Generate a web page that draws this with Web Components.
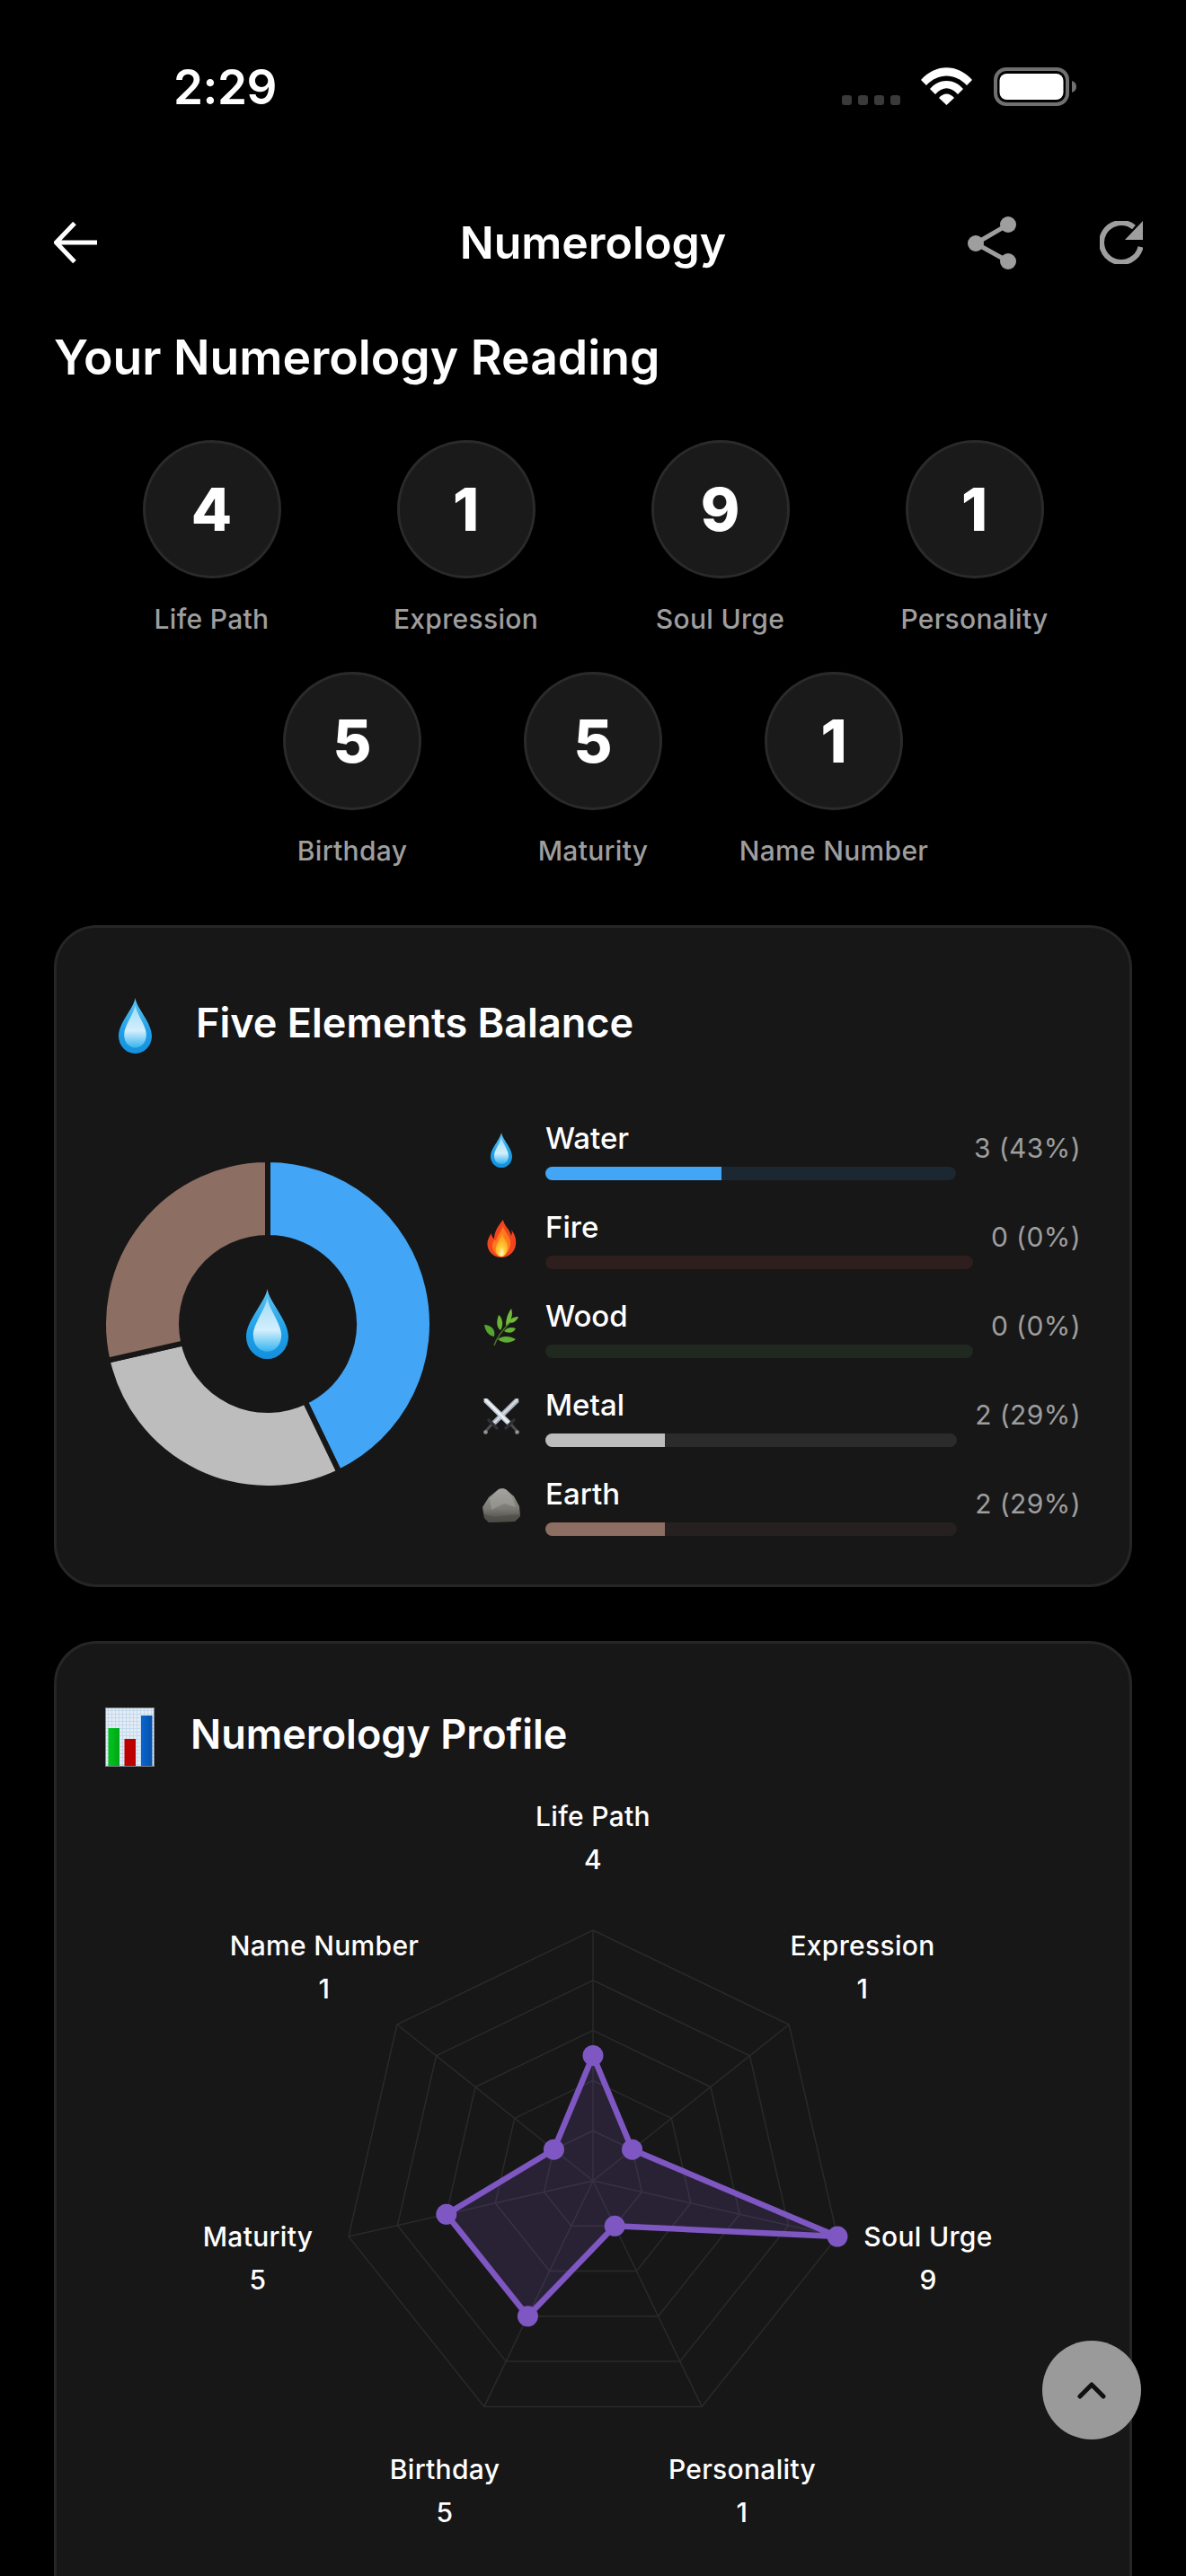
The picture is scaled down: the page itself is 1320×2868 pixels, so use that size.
<!DOCTYPE html>
<html lang="en">
<head>
<meta charset="utf-8">
<title>Numerology</title>
<style>
    html, body { margin: 0; padding: 0; background: #000; }
    body { width: 1320px; height: 2868px; overflow: hidden; color: #fff; font-family: Inter, "Noto Sans", sans-serif; }
    numerology-screen { display: block; }
</style>
</head>
<body>
<numerology-screen>
    <status-bar></status-bar>
    <app-header></app-header>
    <h-title>Your Numerology Reading</h-title>
    <badge-row pitch="283">
        <number-badge value="4" label="Life Path"></number-badge>
        <number-badge value="1" label="Expression"></number-badge>
        <number-badge value="9" label="Soul Urge"></number-badge>
        <number-badge value="1" label="Personality"></number-badge>
    </badge-row>
    <badge-row pitch="268" last>
        <number-badge value="5" label="Birthday"></number-badge>
        <number-badge value="5" label="Maturity"></number-badge>
        <number-badge value="1" label="Name Number"></number-badge>
    </badge-row>
    <section-card heading="Five Elements Balance" icon="drop" icon-x="15" icon-w="37" icon-h="62" gap="49" pad="55" card-h="737">
        <elements-balance>
            <donut-chart></donut-chart>
            <element-list>
                <element-row icon="drop" iw="24" ih="39" name="Water" value="3 (43%)" pct="43" fill="#42a5f5" track="#1b2731"></element-row>
                <element-row icon="fire" iw="33" ih="42" name="Fire" value="0 (0%)" pct="0" fill="#ef5350" track="#2f1e1e"></element-row>
                <element-row icon="leaf" iw="38" ih="42" name="Wood" value="0 (0%)" pct="0" fill="#66bb6a" track="#202920"></element-row>
                <element-row icon="swords" iw="40" ih="40" name="Metal" value="2 (29%)" pct="29" fill="#bdbdbd" track="#2b2b2b"></element-row>
                <element-row icon="rock" iw="42" ih="38" name="Earth" value="2 (29%)" pct="29" fill="#8d6e63" track="#262120"></element-row>
            </element-list>
        </elements-balance>
    </section-card>
    <section-card heading="Numerology Profile" icon="chart" icon-x="0" icon-w="55" icon-h="66" gap="40" pad="50" card-h="1200">
        <radar-chart></radar-chart>
    </section-card>
    <scroll-top></scroll-top>
</numerology-screen>

<script>
// emoji have no font here, so they are little svgs
const EMOJI = {
    drop: `<svg viewBox="0 0 24 38" preserveAspectRatio="none" width="100%" height="100%">
        <defs>
            <linearGradient id="dropOuter" x1="0" y1="0" x2="0" y2="1"><stop offset="0" stop-color="#5cc4f2"/><stop offset=".6" stop-color="#1f9fe8"/><stop offset="1" stop-color="#1590dc"/></linearGradient>
            <linearGradient id="dropInner" x1="0" y1="0" x2="0" y2="1"><stop offset="0" stop-color="#9fdcf8"/><stop offset=".6" stop-color="#d3effc"/><stop offset="1" stop-color="#35b4f0"/></linearGradient>
        </defs>
        <path d="M12 0C13 7 24 17 24 26A12 12 0 0 1 0 26C0 17 11 7 12 0Z" fill="url(#dropOuter)"/>
        <path d="M12 5C13 11 20 19 20 25C20 31 16 34 12 34C8 34 4 31 4 25C4 19 11 11 12 5Z" fill="url(#dropInner)"/>
    </svg>`,
    fire: `<svg viewBox="0 0 33 42" width="100%" height="100%">
        <defs><radialGradient id="fireCore" cx=".5" cy=".85" r=".7"><stop offset="0" stop-color="#fffbe0"/><stop offset=".35" stop-color="#ffd23c"/><stop offset="1" stop-color="#ff9a1f"/></radialGradient></defs>
        <path d="M18 0C19 7 26 11 27 18C28 15 28 13 27 11C31 16 33 22 32 28C31 36 24 42 16 42C8 42 1 36 0.500 28C0 23 3 18 5 15C5 18 6 20 8 21C8 13 13 6 18 0Z" fill="#f0451f"/>
        <path d="M18 7C19 13 25 17 26 24C27 32 22 40 16 41C10 40 5 34 6 27C7 23 9 21 10 24C11 18 16 13 18 7Z" fill="#ff7a1c"/>
        <path d="M17 15C18 21 23 24 23 30C23 36 20 41 16 41C12 41 9 36 10 31C11 25 15 21 17 15Z" fill="url(#fireCore)"/>
    </svg>`,
    leaf: `<svg viewBox="0 0 38 42" width="100%" height="100%">
        <path d="M11 41C14 32 20 24 29 15" stroke="#4a7a22" stroke-width="1.400" fill="none"/>
        <path d="M11 31C4 30 1 24 0 18C7 18 13 23 11 31Z" fill="#55a52e"/>
        <path d="M18 24C14 21 13 15 16 7C20 10 22 18 18 24Z" fill="#6ab535"/>
        <path d="M24 19C24 14 25 7 30 0C32 5 31 14 24 19Z" fill="#74bd3c"/>
        <path d="M27 15C29 11 33 9 38 9C36 14 32 17 27 15Z" fill="#72bb3a"/>
        <path d="M22 25C25 21 30 20 35 22C33 27 27 28 22 25Z" fill="#66b234"/>
        <path d="M15 34C20 30 28 30 35 34C29 39 21 39 15 34Z" fill="#5fad32"/>
    </svg>`,
    swords: `<svg viewBox="0 0 40 40" width="100%" height="100%">
        <path d="M29 27L38 37M11 27L2 37" stroke="#4b4d52" stroke-width="3" stroke-linecap="round"/>
        <path d="M39 0L35.500 0L9 26L13 30L39.500 4Z" fill="#aeb8c2"/>
        <path d="M38 1L11 28" stroke="#e3e9ee" stroke-width="1.500"/>
        <path d="M0.500 0L4.500 0L31 26L27 30L0.500 4Z" fill="#c6d0d8"/>
        <path d="M2 1L29 28" stroke="#f2f6f9" stroke-width="1.800"/>
        <path d="M6 24L15 33M34 24L25 33" stroke="#2f3136" stroke-width="3.500" stroke-linecap="round"/>
        <circle cx="2.500" cy="37.500" r="2.300" fill="#9c8f90"/><circle cx="37.500" cy="37.500" r="2.300" fill="#9c8f90"/>
    </svg>`,
    rock: `<svg viewBox="0 0 42 38" width="100%" height="100%">
        <defs><linearGradient id="rockFill" x1="0" y1="0" x2="0" y2="1"><stop offset="0" stop-color="#9d9c96"/><stop offset=".6" stop-color="#7a7973"/><stop offset="1" stop-color="#45443f"/></linearGradient></defs>
        <path d="M18 1C21 0 25 0 27 2L35 9L41 20L42 31L36 37L7 38L2 33L0 21L7 10Z" fill="url(#rockFill)"/>
        <path d="M18 1C21 0 25 0 27 2L33 10L37 21L24 17L10 24L8 11Z" fill="#a9a8a2" opacity=".5"/>
        <path d="M2 29L14 32L28 30L41 29L42 31L36 37L7 38L2 33Z" fill="#4f4e49" opacity=".65"/>
    </svg>`,
    chart: `<svg viewBox="0 0 55 66" width="100%" height="100%">
        <defs>
            <pattern id="chartGrid" width="4" height="4" patternUnits="userSpaceOnUse"><rect width="4" height="4" fill="#e4edf5"/><rect x="3" width="1" height="4" fill="#c4d9ec"/><rect y="3" width="4" height="1" fill="#c4d9ec"/></pattern>
            <linearGradient id="barGreen" x1="0" x2="1" y1="0" y2="0"><stop offset="0" stop-color="#00c41c"/><stop offset="1" stop-color="#00a618"/></linearGradient>
            <linearGradient id="barBlue" x1="0" x2="1" y1="0" y2="0"><stop offset="0" stop-color="#0a66cf"/><stop offset="1" stop-color="#0650a8"/></linearGradient>
        </defs>
        <rect x=".5" y=".5" width="54" height="65" fill="url(#chartGrid)" stroke="#7d8186"/>
        <rect x="3.500" y="23" width="12.500" height="42" fill="url(#barGreen)"/>
        <rect x="21.500" y="35" width="12.500" height="30" fill="#bc0000"/>
        <rect x="40" y="9" width="12.500" height="56" fill="url(#barBlue)"/>
    </svg>`
};

class Base extends HTMLElement {
    constructor() {
        super();
        this.attachShadow({ mode: 'open' });
    }
    attr(name, fallback = '') {
        return this.getAttribute(name) ?? fallback;
    }
}

class NumerologyScreen extends Base {
    connectedCallback() {
        this.shadowRoot.innerHTML = `
            <style>
                :host { display: block; position: relative; width: 1320px; height: 2868px; overflow: hidden; background: #000; }
                .content { display: flex; flex-direction: column; padding: 0 60px; }
            </style>
            <div class="content"><slot></slot></div>
        `;
    }
}

class StatusBar extends Base {
    connectedCallback() {
        this.shadowRoot.innerHTML = `
            <style>
                :host { display: flex; align-items: flex-start; height: 210px; margin: 0 -60px; padding: 0 122px 0 193px; box-sizing: border-box; justify-content: space-between; }
                .time { font: 600 53px/1 Inter, sans-serif; margin-top: 71px; color: #fff; letter-spacing: -.5px; }
                .icons { display: flex; align-items: flex-start; margin-top: 75px; }
                .dots { display: flex; gap: 7px; margin-top: 31px; margin-right: 23px; }
                .dots i { width: 11px; height: 11px; border-radius: 3px; background: #3a3a3a; }
                svg { display: block; }
                .wifi { margin-right: 24px; }
            </style>
            <div class="time">2:29</div>
            <div class="icons">
                <div class="dots"><i></i><i></i><i></i><i></i></div>
                <svg class="wifi" width="57" height="42" viewBox="0 0 57 42" fill="#fff">
                    <path d="M0 14C16-4.500 41-4.500 57 14L51 20C38 6 19 6 6 20Z"/>
                    <path d="M10 24C20 12 37 12 47 24L41 30C33 21 24 21 16 30Z"/>
                    <path d="M20 34C25 28 32 28 37 34L28.500 42Z"/>
                </svg>
                <svg width="92" height="43" viewBox="0 0 92 43">
                    <rect x="2" y="2" width="80" height="39" rx="12" fill="none" stroke="#707070" stroke-width="4"/>
                    <rect x="6.500" y="7" width="71" height="29" rx="8" fill="#fff"/>
                    <path d="M87 15C90 16 92 18 92 21.500C92 25 90 27 87 28Z" fill="#707070"/>
                </svg>
            </div>
        `;
    }
}

class AppHeader extends Base {
    connectedCallback() {
        this.shadowRoot.innerHTML = `
            <style>
                :host { display: flex; align-items: center; height: 120px; position: relative; }
                .title { position: absolute; left: 0; right: 0; text-align: center; font: 600 50px/1 Inter, sans-serif; color: #fff; }
                .spacer { flex: 1; }
                svg { display: block; position: relative; }
                .share { margin-right: 93px; }
                .refresh { margin-right: -12px; }
            </style>
            <svg width="48" height="46" viewBox="0 0 48 46" fill="none" stroke="#fff" stroke-width="5"><path d="M48 23H3M23 1.500L2.500 23L23 44.500"/></svg>
            <div class="title">Numerology</div>
            <div class="spacer"></div>
            <svg class="share" width="54" height="59" viewBox="0 0 54 59" fill="#9e9e9e">
                <path d="M9 30L45 9M9 30L45 50" stroke="#9e9e9e" stroke-width="5" fill="none"/>
                <circle cx="9" cy="30" r="9"/><circle cx="45" cy="9" r="9"/><circle cx="45" cy="50" r="9"/>
            </svg>
            <svg class="refresh" width="48" height="48" viewBox="0 0 48 48" fill="none">
                <path d="M45.500 29A22 22 0 1 1 38 7" stroke="#9e9e9e" stroke-width="6"/>
                <path d="M28 21L48 0V21Z" fill="#9e9e9e"/>
            </svg>
        `;
    }
}

class HTitle extends Base {
    connectedCallback() {
        this.shadowRoot.innerHTML = `
            <style>:host { display: block; font: 600 53.500px/68px Inter, sans-serif; color: #fff; margin: 34px 0 58px; }</style>
            <slot></slot>
        `;
    }
}

class BadgeRow extends Base {
    connectedCallback() {
        this.shadowRoot.innerHTML = `
            <style>
                :host { display: flex; justify-content: center; height: 258px; --pitch: ${this.attr('pitch', '283')}px; }
                :host([last]) { margin-bottom: 24px; }
            </style>
            <slot></slot>
        `;
    }
}

class NumberBadge extends Base {
    connectedCallback() {
        this.shadowRoot.innerHTML = `
            <style>
                :host { display: flex; flex-direction: column; align-items: center; width: var(--pitch); flex: none; }
                .ring { width: 154px; height: 154px; box-sizing: border-box; border-radius: 50%; background: #1a1a1a; border: 3px solid #2a2a2a;
                    display: flex; align-items: center; justify-content: center; font: 800 66px/1 Inter, sans-serif; color: #fff; }
                .label { margin-top: 27px; font: 500 30px/36px Inter, sans-serif; color: #9e9e9e; letter-spacing: .3px; white-space: nowrap; }
            </style>
            <div class="ring">${this.attr('value')}</div>
            <div class="label">${this.attr('label')}</div>
        `;
    }
}

class SectionCard extends Base {
    connectedCallback() {
        this.shadowRoot.innerHTML = `
            <style>
                :host { display: block; box-sizing: border-box; height: ${this.attr('card-h')}px; margin-bottom: 60px; flex: none;
                    background: #171717; border: 3px solid #262626; border-radius: 48px; padding: ${this.attr('pad')}px 54px 0; }
                .head { display: flex; align-items: center; height: 108px; }
                .icon { flex: none; width: ${this.attr('icon-w')}px; height: ${this.attr('icon-h')}px; margin-right: ${this.attr('gap')}px; margin-left: ${this.attr('icon-x')}px; }
                h2 { margin: 0 0 8px; font: 600 45px/1 Inter, sans-serif; color: #fff; }
            </style>
            <div class="head">
                <div class="icon">${EMOJI[this.attr('icon')]}</div>
                <h2>${this.attr('heading')}</h2>
            </div>
            <slot></slot>
        `;
    }
}

class ElementsBalance extends Base {
    connectedCallback() {
        this.shadowRoot.innerHTML = `
            <style>:host { display: flex; align-items: center; gap: 56px; height: 552px; padding-top: 8px; box-sizing: border-box; }</style>
            <slot></slot>
        `;
    }
}

class DonutChart extends Base {
    connectedCallback() {
        // stroke eats 3px off each edge, so R and r are a bit past the visible ring
        const cx = 183, cy = 183, R = 183, r = 96;
        const slices = [[3, '#42a5f5'], [2, '#bdbdbd'], [2, '#8d6e63']];
        const total = 7;
        let start = -Math.PI / 2;
        let paths = '';
        for (const [n, color] of slices) {
            const end = start + n / total * Math.PI * 2;
            const large = n / total > .5 ? 1 : 0;
            const p = (rad, a) => `${(cx + rad * Math.cos(a)).toFixed(2)} ${(cy + rad * Math.sin(a)).toFixed(2)}`;
            paths += `<path d="M${p(R, start)}A${R} ${R} 0 ${large} 1 ${p(R, end)}L${p(r, end)}A${r} ${r} 0 ${large} 0 ${p(r, start)}Z" fill="${color}" stroke="#171717" stroke-width="6"/>`;
            start = end;
        }
        this.shadowRoot.innerHTML = `
            <style>
                :host { display: block; position: relative; width: 366px; height: 366px; flex: none; margin: 0 0 4px -2px; }
                svg { display: block; }
                .center { position: absolute; left: 159px; top: 144px; width: 47px; height: 78px; }
            </style>
            <svg width="366" height="366" viewBox="0 0 366 366">${paths}</svg>
            <div class="center">${EMOJI.drop}</div>
        `;
    }
}

class ElementList extends Base {
    connectedCallback() {
        this.shadowRoot.innerHTML = `
            <style>:host { display: flex; flex-direction: column; flex: 1; min-width: 0; gap: 0; }</style>
            <slot></slot>
        `;
    }
}

class ElementRow extends Base {
    connectedCallback() {
        this.shadowRoot.innerHTML = `
            <style>
                :host { display: flex; align-items: center; height: 99px; }
                .icon { flex: none; width: 42px; height: 42px; display: flex; align-items: center; justify-content: center; margin: 4px 28px 0 0; }
                .icon div { width: ${this.attr('iw')}px; height: ${this.attr('ih')}px; flex: none; }
                .mid { flex: 1; min-width: 0; padding-top: 5px; }
                .name { font: 500 33px/40px Inter, sans-serif; color: #fff; margin-bottom: 12px; }
                .track { height: 15px; border-radius: 8px; overflow: hidden; background: ${this.attr('track')}; }
                .bar { height: 100%; background: ${this.attr('fill')}; width: ${this.attr('pct')}%; }
                .value { flex: none; margin-left: 20px; font: 400 30px/36px Inter, sans-serif; color: #9e9e9e; letter-spacing: .4px; }
            </style>
            <div class="icon"><div>${EMOJI[this.attr('icon')]}</div></div>
            <div class="mid">
                <div class="name">${this.attr('name')}</div>
                <div class="track"><div class="bar"></div></div>
            </div>
            <div class="value">${this.attr('value')}</div>
        `;
    }
}

class RadarChart extends Base {
    connectedCallback() {
        const cx = 543, cy = 440, R = 279;
        // label, value, label x, label baseline
        const data = [
            ['Life Path', 4, 543, 45],
            ['Expression', 1, 843, 189],
            ['Soul Urge', 9, 916, 513],
            ['Personality', 1, 709, 772],
            ['Birthday', 5, 378, 772],
            ['Maturity', 5, 170, 513],
            ['Name Number', 1, 244, 189]
        ];
        const pt = (i, k) => {
            const a = -Math.PI / 2 + i * 2 * Math.PI / 7;
            return [cx + R * k * Math.cos(a), cy + R * k * Math.sin(a)].map(v => v.toFixed(1));
        };
        let grid = '';
        for (const k of [.2, .4, .6, .8, 1]) {
            grid += `<polygon points="${data.map((d, i) => pt(i, k).join(',')).join(' ')}" fill="none" stroke="#2a2a2a" stroke-width="1.500"/>`;
        }
        data.forEach((d, i) => {
            grid += `<line x1="${cx}" y1="${cy}" x2="${pt(i, 1)[0]}" y2="${pt(i, 1)[1]}" stroke="#2a2a2a" stroke-width="1.500"/>`;
        });
        // the plotted radius is (value + 1) / 10 of the outer ring
        const shape = data.map((d, i) => pt(i, (d[1] + 1) / 10));
        const dots = shape.map(p => `<circle cx="${p[0]}" cy="${p[1]}" r="11.500" fill="#7e57c2"/>`).join('');
        const labels = data.map(d => `
            <text x="${d[2]}" y="${d[3]}" text-anchor="middle" class="t">${d[0]}</text>
            <text x="${d[2]}" y="${d[3] + 48}" text-anchor="middle" class="t">${d[1]}</text>`).join('');
        this.shadowRoot.innerHTML = `
            <style>
                :host { display: block; }
                svg { display: block; overflow: visible; }
                .t { font: 500 30px Inter, sans-serif; fill: #fff; letter-spacing: .3px; }
            </style>
            <svg width="1080" height="900" viewBox="0 0 1080 900">
                ${grid}
                <polygon points="${shape.map(p => p.join(',')).join(' ')}" fill="#7e57c2" fill-opacity=".18" stroke="#7e57c2" stroke-width="6.500" stroke-linejoin="round"/>
                ${dots}
                ${labels}
            </svg>
        `;
    }
}

class ScrollTop extends Base {
    connectedCallback() {
        this.shadowRoot.innerHTML = `
            <style>
                :host { position: absolute; left: 1160px; top: 2606px; width: 110px; height: 110px; border-radius: 50%; background: #9a9a9a;
                    display: flex; align-items: center; justify-content: center; }
                svg { display: block; }
            </style>
            <svg width="32" height="20" viewBox="0 0 32 20" fill="none" stroke="#111" stroke-width="5" stroke-linecap="round" stroke-linejoin="round"><path d="M3 17L16 4L29 17"/></svg>
        `;
    }
}

customElements.define('numerology-screen', NumerologyScreen);
customElements.define('status-bar', StatusBar);
customElements.define('app-header', AppHeader);
customElements.define('h-title', HTitle);
customElements.define('badge-row', BadgeRow);
customElements.define('number-badge', NumberBadge);
customElements.define('section-card', SectionCard);
customElements.define('elements-balance', ElementsBalance);
customElements.define('donut-chart', DonutChart);
customElements.define('element-list', ElementList);
customElements.define('element-row', ElementRow);
customElements.define('radar-chart', RadarChart);
customElements.define('scroll-top', ScrollTop);
</script>
</body>
</html>
